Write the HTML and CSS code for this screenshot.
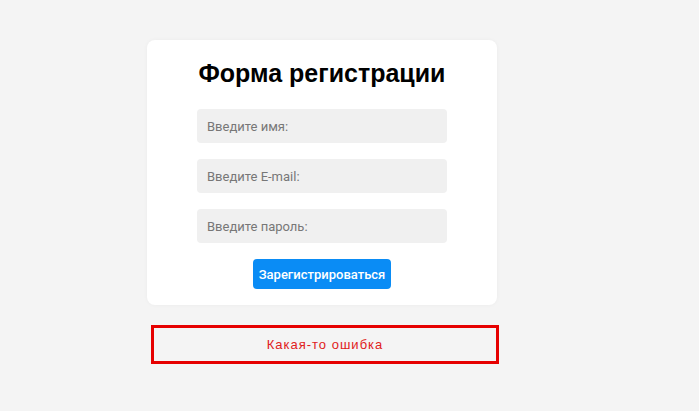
FILE: index.html
```html
<!DOCTYPE html>
<html lang="ru">
<head>
  <meta charset="UTF-8">
  <meta name="viewport" content="width=device-width, initial-scale=1.0">
  <title>Регистрация</title>
  <link rel="stylesheet" href="styles.css">
</head>
<body>
  <div class="wrap">
    <form class="card">
      <h1>Форма регистрации</h1>
      <input type="text" placeholder="Введите имя:">
      <input type="email" placeholder="Введите E-mail:">
      <input type="password" placeholder="Введите пароль:">
      <button type="submit">Зарегистрироваться</button>
    </form>
    <div class="error">Какая-то ошибка</div>
  </div>
</body>
</html>
```

FILE: styles.css
```css
body { margin: 0; background: #f4f4f4; font-family: "Liberation Sans", Arial, sans-serif; }
.wrap { width: 352px; padding: 40px 0 0 147px; }
.card { width: 350px; box-sizing: border-box; background: #fff; border-radius: 8px; padding: 18px 0 16px; display: flex; flex-direction: column; align-items: center; gap: 16px; box-shadow: 0 0 4px rgba(0,0,0,0.04); }
h1 { margin: 0 0 5px; font-size: 25px; line-height: 30px; font-weight: bold; color: #000; }
input { width: 250px; height: 34px; box-sizing: border-box; border: none; border-radius: 4px; background: #f0f0f0; padding: 0 10px; font-family: Roboto, sans-serif; font-size: 13px; outline: none; }
input::placeholder { color: #777; }
button { height: 30px; padding: 0 6px; border: none; border-radius: 4px; background: #0a8cf5; color: #fff; font-family: Roboto, sans-serif; font-size: 13px; font-weight: 500; }
.error { margin: 20px 0 0 4px; height: 39px; box-sizing: border-box; border: 3px solid #e60000; display: flex; align-items: center; justify-content: center; color: #e02020; font-size: 13px; letter-spacing: 1px; }
```
